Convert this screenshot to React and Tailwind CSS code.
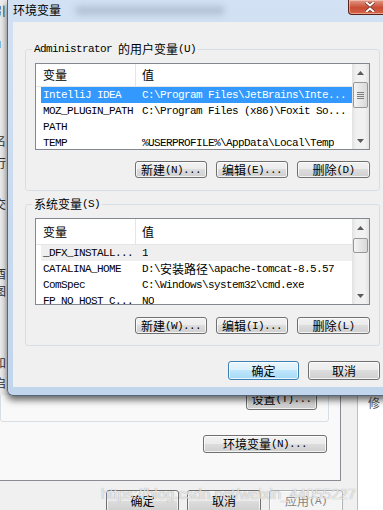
const MONO = "font-['Liberation_Mono','Noto_Sans_CJK_SC',monospace] text-[11px] tracking-[-0.6px]"

function Z({ children }) {
  return <span className="font-['Noto_Sans_CJK_SC',sans-serif] text-[12px] tracking-normal">{children}</span>
}

function Btn({ children, className = '', primary, disabled }) {
  let look = 'border-[#707070] bg-[linear-gradient(#f2f2f2,#ebebeb_50%,#dddddd_50%,#cfcfcf)]'
  if (primary) look = 'border-[#3c7fb1] bg-[linear-gradient(#eaf6fd,#d9f0fc_50%,#bee6fd_50%,#a7d9f5)]'
  if (disabled) look = 'border-[#adb2b5] bg-[#f4f4f4] text-[#838383]'
  return (
    <div className={`flex shrink-0 items-center justify-center rounded-[3px] border leading-[14px] shadow-[inset_0_0_0_1px_rgba(255,255,255,0.75)] ${look} ${className}`}>
      {children}
    </div>
  )
}

function Arrow({ down }) {
  return (
    <svg width="7" height="4" viewBox="0 0 7 4">
      <path d={down ? 'M0 0h7L3.5 4z' : 'M0 4h7L3.5 0z'} fill="#5a5a5a" />
    </svg>
  )
}

function ScrollBar({ thumb, grip }) {
  return (
    <div className="flex w-[17px] shrink-0 flex-col bg-[linear-gradient(90deg,#e2e2e2,#f1f1f1_25%,#f1f1f1_75%,#e2e2e2)]">
      <div className="flex h-[17px] items-center justify-center">
        <Arrow />
      </div>
      <div className="flex-1">
        <div className={`mx-[1px] flex flex-col items-center justify-center gap-[1px] rounded-[2px] border border-[#979797] bg-[linear-gradient(90deg,#f4f4f4,#e6e6e6_50%,#d9d9d9)] ${thumb}`}>
          {grip && (
            <>
              <div className="h-px w-[7px] bg-[#7d7d7d]" />
              <div className="h-px w-[7px] bg-[#7d7d7d]" />
              <div className="h-px w-[7px] bg-[#7d7d7d]" />
              <div className="h-px w-[7px] bg-[#7d7d7d]" />
            </>
          )}
        </div>
      </div>
      <div className="flex h-[17px] items-center justify-center">
        <Arrow down />
      </div>
    </div>
  )
}

function VarList({ rows, headerH, thumb, grip }) {
  return (
    <div className="flex h-[87px] border border-[#828790] bg-white">
      <div className="flex min-w-0 flex-1 flex-col overflow-hidden">
        <div className={`flex shrink-0 border-b border-[#e5e5e5] ${headerH}`}>
          <div className="flex w-[100px] items-center border-r border-[#e5e5e5] pl-[7px] leading-[14px]">
            <Z>变量</Z>
          </div>
          <div className="flex items-center pl-[6px] leading-[14px]">
            <Z>值</Z>
          </div>
        </div>
        <div className="flex flex-col pl-[5px]">
          {rows.map((r) => (
            <div
              key={r.name}
              className={`flex h-[16px] shrink-0 items-center whitespace-nowrap leading-[16px] ${r.sel === 'focus' ? 'bg-[#3399ff] text-white' : r.sel === 'blur' ? 'bg-[#efefef]' : ''}`}
            >
              <div className="w-[99px] shrink-0 overflow-hidden pl-[2px]">{r.name}</div>
              <div className="flex items-center overflow-hidden pl-[2px]">{r.value}</div>
            </div>
          ))}
        </div>
      </div>
      <ScrollBar thumb={thumb} grip={grip} />
    </div>
  )
}

function Group({ legend, children, className = '' }) {
  return (
    <fieldset className={`rounded-[3px] border border-[#d5dfe5] ${className}`}>
      <legend className="ml-[6px] flex h-[14px] items-center px-[2px]">{legend}</legend>
      {children}
    </fieldset>
  )
}

const userRows = [
  { name: 'IntelliJ IDEA', value: 'C:\\Program Files\\JetBrains\\Inte...', sel: 'focus' },
  { name: 'MOZ_PLUGIN_PATH', value: 'C:\\Program Files (x86)\\Foxit So...' },
  { name: 'PATH', value: '' },
  { name: 'TEMP', value: '%USERPROFILE%\\AppData\\Local\\Temp' },
]

const sysRows = [
  { name: '_DFX_INSTALL...', value: '1', sel: 'blur' },
  {
    name: 'CATALINA_HOME',
    value: (
      <>
        D:\<Z>安装路径</Z>\apache-tomcat-8.5.57
      </>
    ),
  },
  { name: 'ComSpec', value: 'C:\\Windows\\system32\\cmd.exe' },
  { name: 'FP_NO_HOST_C...', value: 'NO' },
]

function BackWindow() {
  return (
    <div className="absolute left-0 top-0 flex h-[510px] w-[358px] flex-col border-r border-[#b9c0c9] bg-[#f0f0f0]">
      <div className="flex h-[481px] w-[341px] shrink-0 flex-col items-end justify-end border-b border-r border-[#898c95] bg-[#f9f9f9] pb-[27px] pr-[11px]">
        <div className="flex h-[150px] w-full items-end justify-end rounded-[3px] border border-[#d5dfe5] pb-[11px] pr-[11px]">
          <Btn className="h-[22px] w-[71px]">
            <Z>设置</Z>(T)...
          </Btn>
        </div>
        <Btn className="mr-[2px] mt-[13px] h-[18px] w-[124px]">
          <Z>环境变量</Z>(N)...
        </Btn>
      </div>
      <div className="mt-[9px] flex justify-end gap-[8px] pr-[14px]">
        <Btn className="h-[22px] w-[73px]">
          <Z>确定</Z>
        </Btn>
        <Btn className="h-[22px] w-[74px]">
          <Z>取消</Z>
        </Btn>
        <Btn disabled className="h-[22px] w-[74px]">
          <Z>应用</Z>(A)
        </Btn>
      </div>
    </div>
  )
}

function LeftStrip() {
  return (
    <div className="absolute left-0 top-0 flex h-[395px] w-[8px] flex-col overflow-hidden bg-[#ececec] text-[#333]">
      <div className="-ml-[6px] mt-[4px] leading-[14px]"><Z>引</Z></div>
      <div className="-ml-[6px] mt-[16px] leading-[14px]"><Z>u</Z></div>
      <div className="-ml-[6px] mt-[82px] leading-[14px]"><Z>名</Z></div>
      <div className="-ml-[6px] mt-[6px] leading-[14px]"><Z>行</Z></div>
      <div className="-ml-[6px] mt-[25px] leading-[14px]"><Z>交</Z></div>
      <div className="-ml-[6px] mt-[54px] leading-[14px]"><Z>酉</Z></div>
      <div className="-ml-[6px] mt-[1px] leading-[14px]"><Z>图</Z></div>
      <div className="-ml-[6px] mt-[56px] leading-[14px]"><Z>和</Z></div>
      <div className="-ml-[6px] mt-[4px] leading-[14px]"><Z>启</Z></div>
    </div>
  )
}

function Dialog() {
  return (
    <div className={`absolute left-[7px] top-0 flex w-[390px] flex-col rounded-b-[6px] border border-t-0 border-[#55657a] bg-[linear-gradient(#d2e1f3,#c1d5ec)] px-[5px] pb-[8px] shadow-[0_4px_7px_rgba(0,0,0,0.6)] ${MONO}`}>
      <div className="relative flex h-[22px] shrink-0 items-start justify-between">
        <div className="absolute left-[62px] top-[6px] h-[9px] w-[150px] rounded-full bg-[#8796aa]/40 blur-[3px]" />
        <div className="relative mt-[3px] flex h-[14px] items-center">
          <Z>环境变量</Z>
        </div>
        <div className="flex h-[15px] w-[43px] items-center justify-center rounded-b-[4px] border border-t-0 border-[#5b2418] bg-[linear-gradient(#e39b8a,#c84c34_55%,#d5674a)] shadow-[inset_0_0_0_1px_rgba(255,220,210,0.5)]">
          <svg width="12" height="10" viewBox="0 0 12 10">
            <path d="M2 0l4 3.5L10 0M2 10l4-3.5L10 10" fill="none" stroke="#6a2a1e" strokeWidth="3.4" />
            <path d="M2 0l4 3.5L10 0M2 10l4-3.5L10 10" fill="none" stroke="#fff" strokeWidth="2" />
          </svg>
        </div>
      </div>
      <div className="flex flex-col bg-[#f0f0f0] pb-[7px] pl-[12px] pr-[11px] pt-[20px]">
        <Group legend={<>Administrator&nbsp;<Z>的用户变量</Z>(U)</>}>
          <div className="px-[9px] pb-[12px] pt-[7px]">
            <VarList rows={userRows} headerH="h-[23px]" thumb="mt-[1px] h-[26px]" grip />
            <div className="mt-[11px] flex justify-end gap-[9px]">
              <Btn className="h-[17px] w-[72px]"><Z>新建</Z>(N)...</Btn>
              <Btn className="h-[17px] w-[72px]"><Z>编辑</Z>(E)...</Btn>
              <Btn className="h-[17px] w-[73px]"><Z>删除</Z>(D)</Btn>
            </div>
          </div>
        </Group>
        <Group className="mt-[6px]" legend={<><Z>系统变量</Z>(S)</>}>
          <div className="px-[9px] pb-[11px] pt-[7px]">
            <VarList rows={sysRows} headerH="h-[26px]" thumb="mt-[2px] h-[15px]" />
            <div className="mt-[12px] flex justify-end gap-[9px]">
              <Btn className="h-[17px] w-[72px]"><Z>新建</Z>(W)...</Btn>
              <Btn className="h-[17px] w-[72px]"><Z>编辑</Z>(I)...</Btn>
              <Btn className="h-[17px] w-[73px]"><Z>删除</Z>(L)</Btn>
            </div>
          </div>
        </Group>
        <div className="mt-[15px] flex justify-end gap-[9px]">
          <Btn primary className="h-[19px] w-[71px]"><Z>确定</Z></Btn>
          <Btn className="h-[19px] w-[72px]"><Z>取消</Z></Btn>
        </div>
      </div>
    </div>
  )
}

export default function App() {
  return (
    <div className={`relative h-[510px] w-[383px] overflow-hidden bg-white text-black ${MONO}`}>
      <BackWindow />
      <div className="absolute left-[368px] top-[395px] leading-[16px] text-[#555]">
        <Z>修</Z>
      </div>
      <LeftStrip />
      <Dialog />
      <div className="pointer-events-none absolute left-[101px] top-[483px] whitespace-nowrap font-['Liberation_Sans',sans-serif] text-[15px] tracking-normal text-white/75 [text-shadow:0_0_1px_rgba(80,80,80,0.6)]">
        https://blog.csdn.net/weixin_44055227
      </div>
    </div>
  )
}
